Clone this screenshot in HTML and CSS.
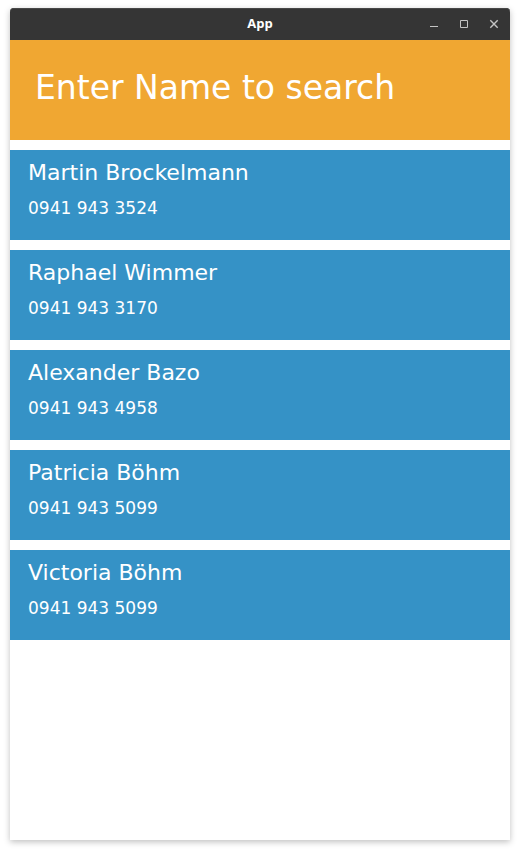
FILE: index.html
```html
<!DOCTYPE html>
<html lang="en">
<head>
<meta charset="utf-8">
<title>App</title>
<link rel="stylesheet" href="styles.css">
</head>
<body>
<main class="window">
  <header class="titlebar">
    <h1 class="title">App</h1>
    <div class="controls">
      <button class="control" type="button" aria-label="Minimize"><svg viewBox="0 0 16 16"><path d="M4 10.5h8"/></svg></button>
      <button class="control" type="button" aria-label="Maximize"><svg viewBox="0 0 16 16"><path d="M4.500 4.500h7v7h-7z"/></svg></button>
      <button class="control" type="button" aria-label="Close"><svg viewBox="0 0 16 16"><path d="M4.300 4.300l7.400 7.400M11.700 4.300l-7.400 7.400" stroke-width="1.400"/></svg></button>
    </div>
  </header>
  <form class="search">
    <input class="search-input" type="text" placeholder="Enter Name to search" aria-label="Enter Name to search">
  </form>
  <ul class="contacts">
    <li class="contact"><h2 class="name">Martin Brockelmann</h2><p class="phone">0941 943 3524</p></li>
    <li class="contact"><h2 class="name">Raphael Wimmer</h2><p class="phone">0941 943 3170</p></li>
    <li class="contact"><h2 class="name">Alexander Bazo</h2><p class="phone">0941 943 4958</p></li>
    <li class="contact"><h2 class="name">Patricia Böhm</h2><p class="phone">0941 943 5099</p></li>
    <li class="contact"><h2 class="name">Victoria Böhm</h2><p class="phone">0941 943 5099</p></li>
  </ul>
</main>
</body>
</html>
```
FILE: styles.css
```css
* {
  box-sizing: border-box;
}

body {
  margin: 0;
  min-height: 100vh;
  padding: 8px 10px 11px;
  display: flex;
  background: #fff;
  color: #fff;
  font-family: "DejaVu Sans", sans-serif;
}

.window {
  flex: 1;
  min-width: 0;
  background: #fff;
  border-radius: 4px 4px 0 0;
  box-shadow: 0 2px 6px rgba(0, 0, 0, 0.25);
}

.titlebar {
  display: grid;
  grid-template-columns: 1fr auto 1fr;
  align-items: center;
  height: 32px;
  background: #353535;
  border-radius: 4px 4px 0 0;
  box-shadow: inset 0 1px #484848;
}

.title {
  grid-column: 2;
  margin: 0;
  padding-bottom: 2px;
  font: bold 13px/18px "Open Sans", sans-serif;
}

.controls {
  display: flex;
  justify-content: flex-end;
  gap: 14px;
  padding-right: 8px;
}

.control {
  display: flex;
  width: 16px;
  height: 16px;
  padding: 0;
  border: 0;
  background: none;
}

.control svg {
  width: 16px;
  height: 16px;
  fill: none;
  stroke: #c4c4c4;
}

.search {
  height: 100px;
  padding: 0 25px;
  background: #f0a732;
}

.search-input {
  width: 100%;
  height: 94px;
  padding: 0;
  border: 0;
  outline: 0;
  background: none;
  color: #fff;
  font: 33px/40px "DejaVu Sans", sans-serif;
}

.search-input::placeholder {
  color: #fff;
  opacity: 1;
}

.contacts {
  display: grid;
  gap: 10px;
  margin: 0;
  padding: 10px 0;
  list-style: none;
}

.contact {
  height: 90px;
  padding: 10px 18px;
  background: #3592c6;
}

.name {
  margin: 0 0 10px;
  font-size: 22px;
  font-weight: normal;
  line-height: 26px;
}

.phone {
  margin: 0;
  font-size: 17px;
  line-height: 24px;
}
```
